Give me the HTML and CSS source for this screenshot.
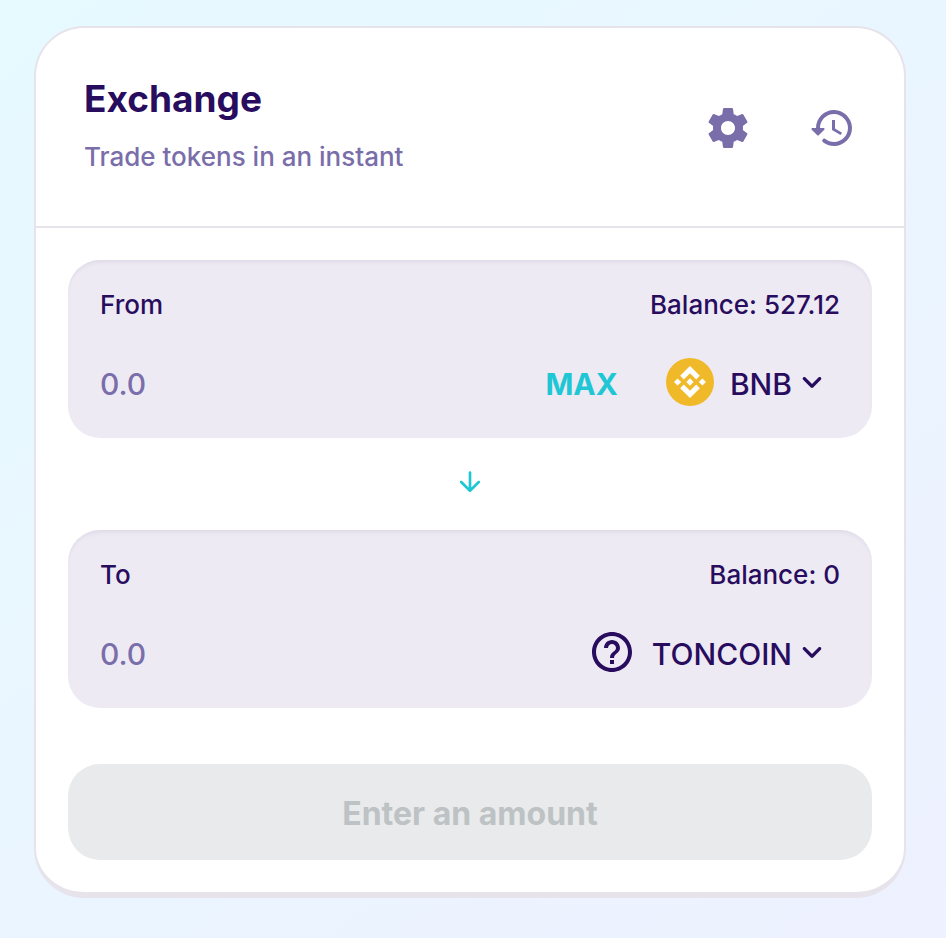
FILE: index.html
```html
<!DOCTYPE html>
<html lang="en">
<head>
  <meta charset="UTF-8" />
  <meta name="viewport" content="width=device-width, initial-scale=1" />
  <title>Exchange</title>
  <link rel="stylesheet" href="styles.css">
</head>
<body>
  <main class="card">
    <header class="card-header">
      <div class="heading">
        <h1>Exchange</h1>
        <p>Trade tokens in an instant</p>
      </div>
      <button class="icon-button" type="button" aria-label="Settings">
        <svg class="icon" viewBox="0 0 24 24"><path d="M19.43 12.98c.04-.32.07-.64.07-.98s-.03-.66-.07-.98l2.11-1.65c.19-.15.24-.42.12-.64l-2-3.46c-.12-.22-.39-.3-.61-.22l-2.49 1c-.52-.4-1.08-.73-1.69-.98l-.38-2.65C14.46 2.18 14.25 2 14 2h-4c-.25 0-.46.18-.49.42l-.38 2.65c-.61.25-1.17.59-1.69.98l-2.49-1c-.23-.09-.49 0-.61.22l-2 3.46c-.13.22-.07.49.12.64l2.11 1.65c-.04.32-.07.65-.07.98s.03.66.07.98l-2.11 1.65c-.19.15-.24.42-.12.64l2 3.46c.12.22.39.3.61.22l2.49-1c.52.4 1.08.73 1.69.98l.38 2.65c.03.24.24.42.49.42h4c.25 0 .46-.18.49-.42l.38-2.65c.61-.25 1.17-.59 1.69-.98l2.49 1c.23.09.49 0 .61-.22l2-3.46c.12-.22.07-.49-.12-.64l-2.11-1.65zM12 15.5c-1.93 0-3.5-1.57-3.5-3.5s1.57-3.5 3.5-3.5 3.5 1.57 3.5 3.5-1.57 3.5-3.5 3.5z"/></svg>
      </button>
      <button class="icon-button" type="button" aria-label="Recent transactions">
        <svg class="icon" viewBox="0 0 24 24"><path d="M13.26 3C8.17 2.86 4 6.95 4 12H2.21c-.45 0-.67.54-.35.85l2.79 2.8c.2.2.51.2.71 0l2.79-2.8c.31-.31.09-.85-.36-.85H6c0-3.9 3.18-7.05 7.1-7 3.72.05 6.85 3.18 6.9 6.9.05 3.91-3.1 7.1-7 7.1-1.61 0-3.1-.55-4.28-1.48-.4-.31-.96-.28-1.32.08-.42.42-.39 1.13.08 1.49C9 20.29 10.91 21 13 21c5.05 0 9.14-4.17 9-9.26-.13-4.69-4.05-8.61-8.74-8.74z"/><path d="M12 8v5l4.28 2.54.72-1.21-3.5-2.08V8z"/></svg>
      </button>
    </header>

    <form class="swap">
      <section class="panel">
        <div class="panel-row">
          <label for="fromAmount">From</label>
          <span>Balance: 527.12</span>
        </div>
        <div class="panel-row amount-row">
          <input class="amount" id="fromAmount" type="text" inputmode="decimal" placeholder="0.0" />
          <button class="max" type="button">MAX</button>
          <button class="token" type="button">
            <svg class="icon" viewBox="1 1 30 30"><circle cx="16" cy="16" r="15" fill="#f0b929"/><path fill="#fff" d="M12.116 14.404L16 10.52l3.886 3.886 2.26-2.26L16 6l-6.144 6.144 2.26 2.26zM6 16l2.26-2.26L10.52 16l-2.26 2.26L6 16zm6.116 1.596L16 21.48l3.886-3.886 2.26 2.259L16 26l-6.144-6.144-.003-.003 2.263-2.257zM21.48 16l2.26-2.26L26 16l-2.26 2.26L21.48 16zm-3.188-.002L16 13.706 13.705 16 16 18.294 18.294 16z"/></svg>
            <span>BNB</span>
            <svg class="chevron" viewBox="0 0 24 24"><path d="M8.12 9.29L12 13.17l3.88-3.88c.39-.39 1.02-.39 1.41 0 .39.39.39 1.02 0 1.41l-4.59 4.59c-.39.39-1.02.39-1.41 0L6.7 10.7c-.39-.39-.39-1.02 0-1.41.39-.38 1.03-.39 1.42 0z"/></svg>
          </button>
        </div>
      </section>

      <button class="switch" type="button" aria-label="Switch tokens">
        <svg viewBox="0 0 24 24"><path d="M11 5v11.17l-4.88-4.88c-.39-.39-1.03-.39-1.42 0-.39.39-.39 1.02 0 1.41l6.59 6.59c.39.39 1.02.39 1.41 0l6.59-6.59c.39-.39.39-1.02 0-1.41-.39-.39-1.02-.39-1.41 0L13 16.17V5c0-.55-.45-1-1-1s-1 .45-1 1z"/></svg>
      </button>

      <section class="panel">
        <div class="panel-row">
          <label for="toAmount">To</label>
          <span>Balance: 0</span>
        </div>
        <div class="panel-row amount-row">
          <input class="amount" id="toAmount" type="text" inputmode="decimal" placeholder="0.0" />
          <button class="token" type="button">
            <svg class="icon" viewBox="0 0 24 24"><path d="M11 18h2v-2h-2v2zm1-16C6.48 2 2 6.48 2 12s4.48 10 10 10 10-4.48 10-10S17.52 2 12 2zm0 18c-4.41 0-8-3.59-8-8s3.59-8 8-8 8 3.59 8 8-3.59 8-8 8zm0-14c-2.21 0-4 1.79-4 4h2c0-1.1.9-2 2-2s2 .9 2 2c0 2-3 1.75-3 5h2c0-2.25 3-2.5 3-5 0-2.21-1.79-4-4-4z"/></svg>
            <span>TONCOIN</span>
            <svg class="chevron" viewBox="0 0 24 24"><path d="M8.12 9.29L12 13.17l3.88-3.88c.39-.39 1.02-.39 1.41 0 .39.39.39 1.02 0 1.41l-4.59 4.59c-.39.39-1.02.39-1.41 0L6.7 10.7c-.39-.39-.39-1.02 0-1.41.39-.38 1.03-.39 1.42 0z"/></svg>
          </button>
        </div>
      </section>

      <button class="submit" type="submit" disabled>Enter an amount</button>
    </form>
  </main>
</body>
</html>
```
FILE: styles.css
```css
:root {
  --text: #280d5f;
  --subtle: #7a6eaa;
  --primary: #1fc7d4;
  --border: #e7e3eb;
  --input: #eeeaf4;
}

* {
  box-sizing: border-box;
}

body {
  margin: 0;
  min-height: 100vh;
  padding: 26px 40px 40px 34px;
  font-family: Inter, sans-serif;
  font-size: 26px;
  font-weight: 500;
  line-height: 42px;
  color: var(--text);
  background: linear-gradient(140deg, #e6faff, #eef1ff);
}

button,
input {
  margin: 0;
  padding: 0;
  border: none;
  background: none;
  font: inherit;
  color: inherit;
}

button {
  cursor: pointer;
}

svg {
  display: block;
  fill: currentColor;
}

.card {
  background: white;
  border: 2px solid var(--border);
  border-bottom-width: 6px;
  border-radius: 50px;
}

.card-header {
  display: flex;
  align-items: center;
  gap: 8px;
  padding: 50px 24px 48px 48px;
  border-bottom: 2px solid var(--border);
}

.heading {
  flex-grow: 1;
}

h1 {
  margin: 0 0 16px;
  font-size: 37px;
  font-weight: 700;
  line-height: 42px;
}

.heading p {
  margin: 0;
  color: var(--subtle);
}

.icon-button {
  display: flex;
  align-items: center;
  justify-content: center;
  width: 96px;
  height: 96px;
  color: var(--subtle);
}

.icon {
  width: 48px;
  height: 48px;
}

.swap {
  display: flex;
  flex-direction: column;
  padding: 32px;
}

.panel {
  padding: 24px 32px;
  border-radius: 32px;
  background: var(--input);
  box-shadow: inset 0 4px 4px -2px rgba(74, 74, 104, 0.1);
}

.panel-row {
  display: flex;
  align-items: center;
  justify-content: space-between;
}

.amount-row {
  height: 64px;
  margin-top: 24px;
  font-size: 30px;
}

.amount,
.max,
.token span,
.submit {
  padding-top: 4px;
}

.amount {
  flex: 1;
  min-width: 0;
  outline: none;
}

.amount::placeholder {
  color: var(--subtle);
  opacity: 1;
}

.max {
  padding-right: 16px;
  padding-left: 16px;
  font-weight: 700;
  color: var(--primary);
}

.token {
  display: flex;
  align-items: center;
  margin-left: 16px;
  padding: 0 8px 0 16px;
}

.token span {
  margin-left: 16px;
}

.chevron {
  width: 40px;
  height: 40px;
}

.switch {
  align-self: center;
  padding: 28px 28px 32px;
  color: var(--primary);
}

.switch svg {
  width: 32px;
  height: 32px;
}

.submit {
  height: 96px;
  margin-top: 56px;
  border-radius: 32px;
  font-size: 32px;
  font-weight: 700;
  color: #bdc2c4;
  background: #e9eaeb;
  cursor: not-allowed;
}
```
